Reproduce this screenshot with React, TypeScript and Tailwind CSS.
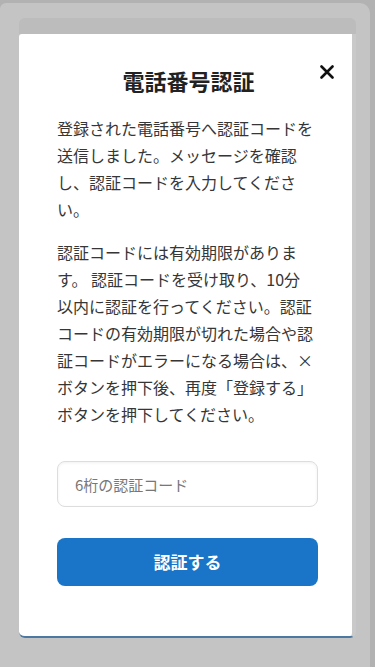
import React from 'react';

const App: React.FC = () => {
  return (
    <div
      className="w-[375px] h-[667px] overflow-hidden bg-[#b2b2b2] pt-[3px] pr-[5px]"
      style={{ fontFamily: '"Noto Sans CJK JP", "Noto Sans", sans-serif' }}
    >
      <div className="h-full bg-[#c4c4c4] rounded-tr-[10px] rounded-tl-[6px] pt-[15px] pl-[19px]">
        {/* shadow band above the dialog */}
        <div className="w-[337px] h-[16px] bg-[#bcbcbc] rounded-t-[6px]" />

        {/* dialog */}
        <div className="w-[337px] bg-white border-r-[4px] border-r-[#c9c9c9] border-b-2 border-b-[#4d78a1] rounded-b-[6px] rounded-tl-[3px] pl-[38px] pr-[34px] pt-[31px] pb-[50px] text-[#363636]">
          <div className="relative flex items-center justify-center">
            <h1 className="text-[22px] leading-[30px] font-bold text-[#222222] ml-[2px]">電話番号認証</h1>
            <button className="absolute right-[-21px] top-[-5px] w-[24px] h-[24px] flex items-center justify-center">
              <svg width="14" height="14" viewBox="0 0 14 14">
                <path d="M1.5 1.5 L12.5 12.5 M12.5 1.5 L1.5 12.5" stroke="#111" strokeWidth="2.6" strokeLinecap="round" />
              </svg>
            </button>
          </div>

          <div className="w-[258px]">
            <p className="mt-[20px] text-[16px] leading-[27px]">
              登録された電話番号へ認証コードを送信しました。メッセージを確認し、認証コードを入力してください。
            </p>
            <p className="mt-[16px] text-[16px] leading-[27px]">
              認証コードには有効期限があります。 認証コードを受け取り、10分以内に認証を行ってください。認証コードの有効期限が切れた場合や認証コードがエラーになる場合は、×ボタンを押下後、再度「登録する」ボタンを押下してください。
            </p>
          </div>

          <input
            type="text"
            placeholder="6桁の認証コード"
            className="mt-[33px] block w-full h-[46px] rounded-[8px] border-[1.5px] border-[#dddddd] shadow-[inset_0_1px_3px_rgba(0,0,0,0.06)] px-[17px] text-[15px] placeholder:text-[#777777] outline-none"
          />

          <button className="mt-[31px] w-full h-[48px] rounded-[8px] bg-[#1a75c8] text-white text-[17px] font-bold">
            認証する
          </button>
        </div>
      </div>
    </div>
  );
};

export default App;
